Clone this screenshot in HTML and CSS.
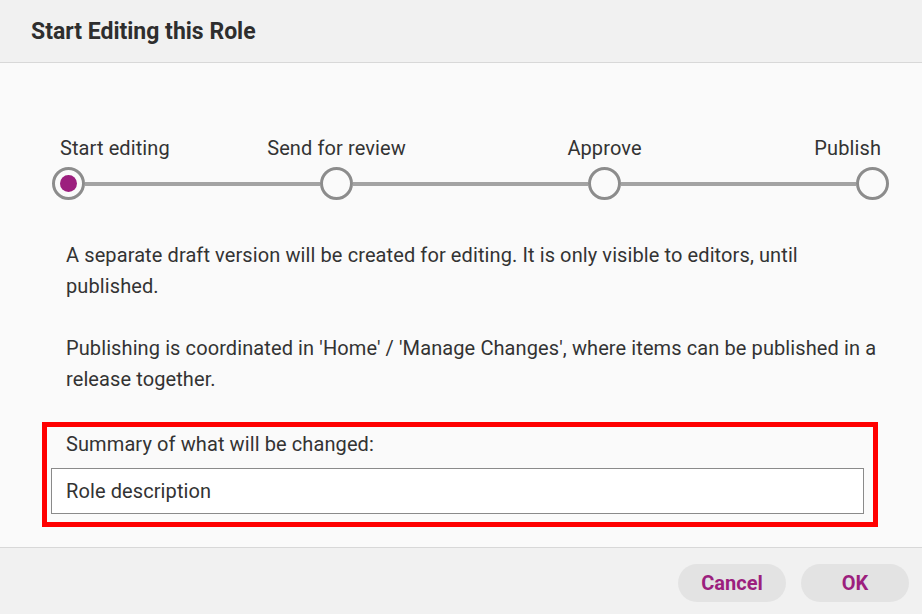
FILE: index.html
```html
<!DOCTYPE html>
<html lang="en">
<head>
    <meta charset="UTF-8">
    <meta name="viewport" content="width=device-width, initial-scale=1.0">
    <title>Start Editing this Role</title>
    <link rel="stylesheet" href="styles.css">
</head>
<body>
    <div class="dialog">
        <div class="dialog-header">
            <h1>Start Editing this Role</h1>
        </div>

        <div class="dialog-body">
            <div class="stepper">
                <div class="step-labels">
                    <div class="step-label first"><span>Start editing</span></div>
                    <div class="step-label"><span>Send for review</span></div>
                    <div class="step-label"><span>Approve</span></div>
                    <div class="step-label last"><span>Publish</span></div>
                </div>
                <div class="step-track">
                    <div class="step-dot active"></div>
                    <div class="step-line"></div>
                    <div class="step-dot"></div>
                    <div class="step-line"></div>
                    <div class="step-dot"></div>
                    <div class="step-line"></div>
                    <div class="step-dot"></div>
                </div>
            </div>

            <div class="info">
                <p>A separate draft version will be created for editing. It is only visible to editors, until published.</p>
                <p>Publishing is coordinated in 'Home' / 'Manage Changes', where items can be published in a release together.</p>
            </div>

            <div class="summary">
                <label for="summary">Summary of what will be changed:</label>
                <input type="text" id="summary" name="summary" value="Role description">
            </div>
        </div>

        <div class="dialog-footer">
            <button type="button">Cancel</button>
            <button type="submit">OK</button>
        </div>
    </div>
</body>
</html>
```

FILE: styles.css
```css
body {
    font-family: Roboto, "Liberation Sans", Arial, sans-serif;
    margin: 0;
    padding: 0;
    color: #333333;
    background-color: #fafafa;
    letter-spacing: 0.1px;
}
.dialog {
    width: 922px;
    height: 614px;
    display: flex;
    flex-direction: column;
}
.dialog-header {
    height: 62px;
    background-color: #f1f1f1;
    border-bottom: 1px solid #d8d8d8;
    display: flex;
    align-items: center;
    padding-left: 31px;
}
h1 {
    margin: 0;
    font-size: 23px;
    font-weight: 700;
    color: #2e2e2e;
    letter-spacing: 0;
}
.dialog-body {
    flex: 1;
    background-color: #fafafa;
    padding-top: 74px;
}
.stepper {
    margin-left: 52px;
    width: 837px;
}
.step-labels {
    display: flex;
    justify-content: space-between;
    font-size: 20px;
    line-height: 23px;
    height: 23px;
    margin-bottom: 7px;
}
.step-label {
    width: 33px;
    flex-shrink: 0;
    display: flex;
    justify-content: center;
    white-space: nowrap;
}
.step-label.first {
    justify-content: flex-start;
    padding-left: 8px;
    box-sizing: border-box;
}
.step-label.last {
    justify-content: flex-end;
    padding-right: 8px;
    box-sizing: border-box;
}
.step-track {
    display: flex;
    align-items: center;
}
.step-dot {
    width: 33px;
    height: 33px;
    box-sizing: border-box;
    border: 3px solid #8c8c8c;
    border-radius: 50%;
    background-color: #fafafa;
    flex-shrink: 0;
    display: flex;
    align-items: center;
    justify-content: center;
}
.step-dot.active::after {
    content: "";
    width: 17px;
    height: 17px;
    border-radius: 50%;
    background-color: #9c1f7e;
}
.step-line {
    flex: 1;
    height: 4px;
    background-color: #a3a3a3;
}
.info {
    padding: 40px 38px 0 66px;
    font-size: 20px;
    line-height: 31px;
}
.info p {
    margin: 0 0 31px 0;
}
.info p:last-child {
    margin-bottom: 0;
}
.summary {
    margin: 27px 0 0 42px;
    width: 836px;
    box-sizing: border-box;
    border: 5px solid #ff0000;
    padding: 6px 9px 8px 4px;
    display: flex;
    flex-direction: column;
}
.summary label {
    font-size: 20px;
    line-height: 23px;
    padding-left: 15px;
    margin-bottom: 12px;
}
.summary input[type="text"] {
    height: 46px;
    box-sizing: border-box;
    border: 1px solid #8a8a8a;
    background-color: #fff;
    padding: 0 14px;
    font-family: Roboto, "Liberation Sans", Arial, sans-serif;
    font-size: 20px;
    letter-spacing: 0.1px;
    color: #333333;
    outline: none;
}
.dialog-footer {
    height: 67px;
    box-sizing: border-box;
    background-color: #f1f1f1;
    border-top: 1px solid #d8d8d8;
    display: flex;
    justify-content: flex-end;
    align-items: flex-start;
    gap: 15px;
    padding: 16px 13px 0 0;
}
button {
    width: 108px;
    height: 38px;
    border: none;
    border-radius: 19px;
    background-color: #e3e3e3;
    color: #9c1f7e;
    font-family: Roboto, "Liberation Sans", Arial, sans-serif;
    font-size: 20px;
    font-weight: 700;
    cursor: pointer;
}
```
